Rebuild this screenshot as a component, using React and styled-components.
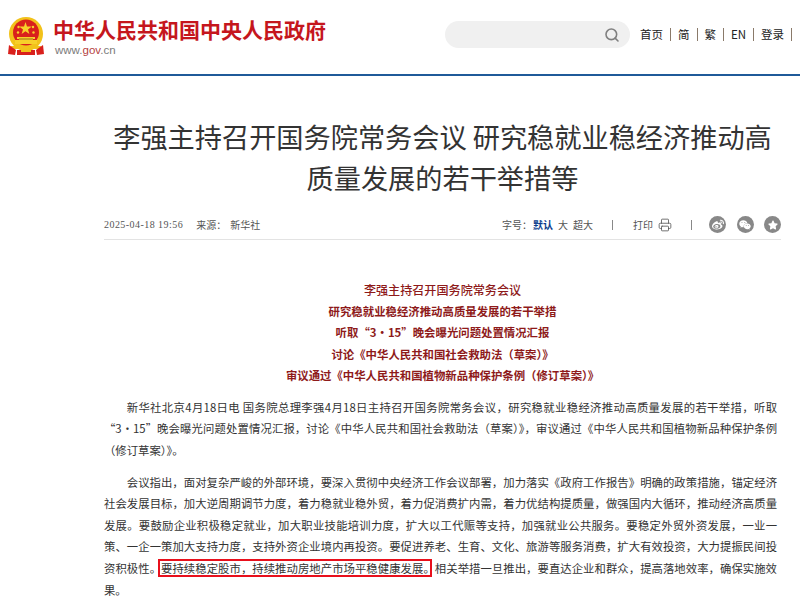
import React from "react";
import styled, { createGlobalStyle } from "styled-components";
import { Search, Printer } from "lucide-react";
import { FaWeibo, FaWeixin, FaStar } from "react-icons/fa";

const GlobalStyle = createGlobalStyle`
  html, body {
    margin: 0;
    height: 603px;
    overflow: hidden;
    background: #fff;
  }
  body {
    font-family: "Noto Sans CJK SC", "Liberation Sans", sans-serif;
  }
`;

const SUBTITLES = [
  "研究稳就业稳经济推动高质量发展的若干举措",
  "听取“3·15”晚会曝光问题处置情况汇报",
  "讨论《中华人民共和国社会救助法（草案）》",
  "审议通过《中华人民共和国植物新品种保护条例（修订草案）》",
];

const NAV = ["首页", "简", "繁", "EN", "登录"];

function Emblem() {
  return (
    <EmblemSvg viewBox="0 0 36 38">
      <circle cx="18" cy="17" r="17" fill="#f2c21a" />
      <circle cx="18" cy="15.5" r="13" fill="#d9201c" />
      <polygon points="17.5,5 19,9.6 23.8,9.6 20,12.4 21.4,17 17.5,14.2 13.6,17 15,12.4 11.2,9.6 16,9.6" fill="#f7d02a" />
      <circle cx="10.5" cy="10" r="1.2" fill="#f7d02a" />
      <circle cx="25" cy="10" r="1.2" fill="#f7d02a" />
      <circle cx="10" cy="15.5" r="1.2" fill="#f7d02a" />
      <circle cx="25.5" cy="15.5" r="1.2" fill="#f7d02a" />
      <rect x="9" y="20" width="18" height="2" fill="#f7d02a" />
      <rect x="7" y="23" width="22" height="4" fill="#f7d02a" />
      <rect x="11" y="21" width="14" height="2" fill="#c9a020" />
      <rect x="3" y="29" width="30" height="3" fill="#f2c21a" />
      <polygon points="1,28 8,33 7,38 0,37" fill="#d9201c" />
      <polygon points="35,28 28,33 29,38 36,37" fill="#d9201c" />
      <rect x="9" y="33" width="18" height="5" fill="#d9201c" />
      <rect x="13" y="33" width="10" height="2" fill="#f2c21a" />
    </EmblemSvg>
  );
}

export default function App() {
  return (
    <>
      <GlobalStyle />
      <Header>
        <Logo>
          <Emblem />
          <LogoText>
            <SiteName>中华人民共和国中央人民政府</SiteName>
            <SiteUrl>www.<span>gov</span>.cn</SiteUrl>
          </LogoText>
        </Logo>
        <SearchBar>
          <Search size={16} color="#808080" strokeWidth={2.4} />
        </SearchBar>
        <Nav>
          {NAV.map(item => (
            <NavItem key={item}>{item}</NavItem>
          ))}
        </Nav>
      </Header>
      <Article>
        <Title>李强主持召开国务院常务会议 研究稳就业稳经济推动高质量发展的若干举措等</Title>
        <Meta>
          <MetaLeft>
            <DateText>2025-04-18 19:56</DateText>
            <span>来源：</span>
            <span>新华社</span>
          </MetaLeft>
          <MetaRight>
            <SizeLabel>字号：<b>默认</b></SizeLabel>
            <span>大</span>
            <span>超大</span>
            <Bar $right={15} />
            <PrintLink>打印<Printer size={14} strokeWidth={1.4} /></PrintLink>
            <Bar $right={12} />
            <ShareGroup>
              <Share><FaWeibo size={12} /></Share>
              <Share><FaWeixin size={12} /></Share>
              <Share><FaStar size={10} /></Share>
            </ShareGroup>
          </MetaRight>
        </Meta>
        <Heading>
          <HeadTitle>李强主持召开国务院常务会议</HeadTitle>
          {SUBTITLES.map(line => (
            <SubTitle key={line}>{line}</SubTitle>
          ))}
        </Heading>
        <Paragraph>新华社北京4月18日电 国务院总理李强4月18日主持召开国务院常务会议，研究稳就业稳经济推动高质量发展的若干举措，听取<wbr />“3·15”晚会曝光问题处置情况汇报，讨论《中华人民共和国社会救助法（草案）》，审议通过《中华人民共和国植物新品种保护条例（修订草案）》。</Paragraph>
        <Paragraph>会议指出，面对复杂严峻的外部环境，要深入贯彻中央经济工作会议部署，加力落实《政府工作报告》明确的政策措施，锚定经济社会发展目标，加大逆周期调节力度，着力稳就业稳外贸，着力促消费扩内需，着力优结构提质量，做强国内大循环，推动经济高质量发展。要鼓励企业积极稳定就业，加大职业技能培训力度，扩大以工代赈等支持，加强就业公共服务。要稳定外贸外资发展，一业一策、一企一策加大支持力度，支持外资企业境内再投资。要促进养老、生育、文化、旅游等服务消费，扩大有效投资，大力提振民间投资积极性。<Marked>要持续稳定股市，持续推动房地产市场平稳健康发展。</Marked>相关举措一旦推出，要直达企业和群众，提高落地效率，确保实施效果。</Paragraph>
      </Article>
    </>
  );
}

const Header = styled.header`
  height: 69px;
  padding: 0 0 5px 8px;
  border-bottom: 2px solid #1f5a99;
  display: flex;
  align-items: center;
`;

const Logo = styled.div`
  display: flex;
  align-items: center;
  gap: 9px;
  width: 437px;
  margin-top: 3px;
`;

const EmblemSvg = styled.svg`
  width: 36px;
  height: 38px;
  flex: none;
`;

const LogoText = styled.div`
  display: flex;
  flex-direction: column;
  gap: 1px;
`;

const SiteName = styled.div`
  font-size: 21px;
  line-height: 26px;
  font-weight: 700;
  color: #c5161d;
  white-space: nowrap;
`;

const SiteUrl = styled.div`
  font-family: "Liberation Sans", sans-serif;
  font-size: 11.5px;
  line-height: 14px;
  margin-left: 2px;
  color: #7b7b7b;

  span {
    color: #b5423f;
  }
`;

const SearchBar = styled.div`
  width: 185px;
  height: 27px;
  box-sizing: border-box;
  border-radius: 14px;
  background: #f0f0f0;
  display: flex;
  align-items: center;
  justify-content: flex-end;
  padding-right: 10px;
  flex: none;
`;

const Nav = styled.nav`
  display: flex;
  align-items: center;
  margin-left: 10px;
  white-space: nowrap;
`;

const NavItem = styled.span`
  font-size: 11.5px;
  line-height: 13px;
  color: #222;
  padding-right: 7px;
  margin-right: 7px;
  border-right: 1px solid #8a7a6a;
`;

const Article = styled.main`
  width: 677px;
  margin-left: 104px;
  padding-top: 40px;
`;

const Title = styled.h1`
  margin: 0;
  font-size: 27.2px;
  line-height: 40.5px;
  font-weight: 400;
  color: #333;
  text-align: center;
`;

const Meta = styled.div`
  margin-top: 13px;
  height: 30px;
  box-sizing: border-box;
  border-bottom: 1px solid #e3e3e3;
  display: flex;
  justify-content: space-between;
  align-items: center;
  font-size: 10px;
  color: #555;
`;

const MetaLeft = styled.div`
  display: flex;
  align-items: center;
  gap: 4px;
`;

const DateText = styled.span`
  font-family: "Liberation Serif", serif;
  font-size: 10px;
  letter-spacing: 0.45px;
  margin-right: 9px;
`;

const MetaRight = styled.div`
  display: flex;
  align-items: center;
  gap: 5px;
`;

const SizeLabel = styled.span`
  b {
    margin-left: 1px;
    color: #0b3c8c;
    font-weight: 700;
  }
`;

const Bar = styled.i`
  width: 1px;
  height: 10px;
  background: #888;
  margin: 0 ${props => props.$right}px 0 14px;
`;

const PrintLink = styled.span`
  display: flex;
  align-items: center;
  gap: 5px;
`;

const ShareGroup = styled.div`
  display: flex;
  gap: 10.5px;
`;

const Share = styled.span`
  width: 17px;
  height: 17px;
  border-radius: 50%;
  background: #888;
  color: #fff;
  display: flex;
  align-items: center;
  justify-content: center;
`;

const Heading = styled.div`
  margin-top: 38.5px;
  text-align: center;
  color: #8e1a1a;
`;

const HeadTitle = styled.div`
  font-size: 12.1px;
  line-height: 22px;
  font-weight: 500;
`;

const SubTitle = styled.div`
  font-size: 11.4px;
  line-height: 21.6px;
  font-weight: 700;
`;

const Paragraph = styled.p`
  margin: 10px 0 0;
  padding-right: 4px;
  font-size: 11.36px;
  line-height: 21.6px;
  text-indent: 2em;
  text-align: justify;
  color: #333;
`;

const Marked = styled.span`
  position: relative;

  &::after {
    content: "";
    position: absolute;
    left: -3px;
    right: 3px;
    top: -1px;
    bottom: -1px;
    border: 2px solid #e8101c;
  }
`;
